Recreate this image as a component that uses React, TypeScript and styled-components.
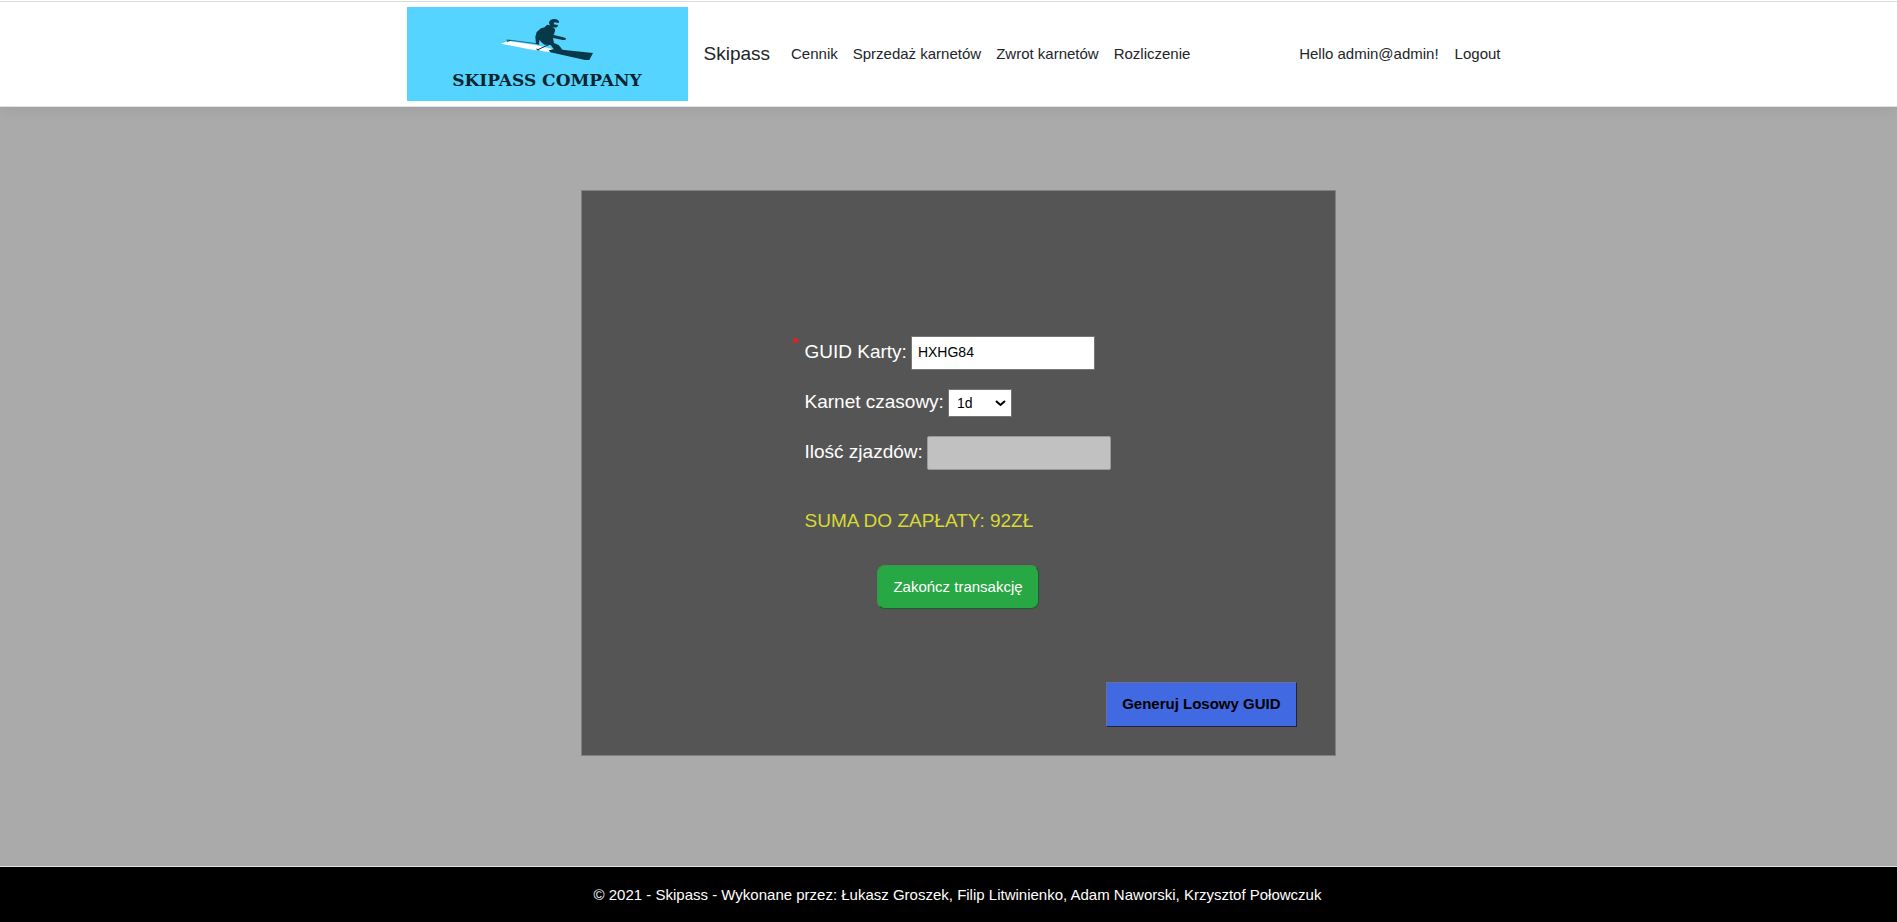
import React from 'react';
import styled, { createGlobalStyle } from 'styled-components';

const GlobalStyle = createGlobalStyle`
  *, *::before, *::after { box-sizing: border-box; }
  body {
    margin: 0;
    background: #aaa;
    color: #212529;
    font-family: "Liberation Sans", Arial, sans-serif;
    font-size: 15px;
    line-height: 22px;
  }
`;

const Page = styled.div`
  display: flex;
  flex-direction: column;
  min-height: 100vh;
`;

const Header = styled.header`
  border-top: 1px solid #fff;
  background: #fff;
  box-shadow: 0 4px 12px rgba(0, 0, 0, 0.06);
`;

const HeaderBar = styled.div`
  display: flex;
  justify-content: center;
  padding: 5px 0 5px 18px;
  border-top: 1px solid #dcdcdc;
  border-bottom: 1px solid #dee2e6;
`;

const HeaderContent = styled.div`
  display: flex;
  align-items: center;
  width: 100%;
  max-width: 1102px;
`;

const Logo = styled.a`
  display: flex;
  flex-direction: column;
  align-items: center;
  flex: none;
  width: 281px;
  height: 94px;
  padding-top: 3px;
  background: #55d4ff;
  color: #06242e;
  text-decoration: none;
`;

const LogoName = styled.span`
  font-family: "DejaVu Serif", serif;
  font-size: 17px;
  font-weight: 700;
  line-height: 20px;
  white-space: nowrap;
`;

const Brand = styled.a`
  margin: 0 14px 0 16px;
  color: #212529;
  font-size: 19px;
  text-decoration: none;
`;

const Nav = styled.nav`
  display: flex;
  flex: 1;
`;

const NavLink = styled.a`
  padding: 0 8px 0 7px;
  color: #212529;
  text-decoration: none;
  white-space: nowrap;
`;

const Account = styled.div`
  display: flex;
  align-items: center;
  gap: 8px;
`;

const LogoutButton = styled.button`
  padding: 0 8px;
  border: 0;
  background: none;
  color: #212529;
  font: inherit;
  cursor: pointer;
`;

const Main = styled.main`
  display: flex;
  flex: 1;
  justify-content: center;
  align-items: flex-start;
  padding: 83px 0 110px 19px;
`;

const Card = styled.form`
  display: flex;
  flex-direction: column;
  width: 100%;
  max-width: 755px;
  padding: 145px 38px 28px;
  border: 1px solid #808080;
  background: #555;
  color: #fff;
`;

const Fields = styled.div`
  display: flex;
  flex-direction: column;
  gap: 18px;
  padding-left: 185px;
`;

const Field = styled.div`
  display: flex;
  align-items: center;
  gap: 4px;
  position: relative;
`;

const Label = styled.label`
  font-size: 19px;
  line-height: 28px;
  padding-bottom: 2px;
`;

const RequiredMark = styled.span`
  position: absolute;
  top: 2px;
  left: -12px;
  width: 5px;
  height: 5px;
  border-radius: 50%;
  background: #e32020;
`;

const TextInput = styled.input`
  width: 184px;
  height: 34px;
  padding: 0 6px 2px;
  border: 1px solid #767676;
  background: #fff;
  color: #000;
  font-family: inherit;
  font-size: 14px;

  &:disabled {
    border-color: #9a9a9a;
    border-radius: 2px;
    background: #c1c1c1;
  }
`;

const SelectWrap = styled.div`
  display: grid;
  align-items: center;

  > * { grid-area: 1 / 1; }
  > svg { justify-self: end; margin-right: 6px; pointer-events: none; }
`;

const Select = styled.select`
  appearance: none;
  width: 64px;
  height: 28px;
  padding: 0 8px;
  border: 1px solid #767676;
  border-radius: 0;
  background: #fff;
  color: #000;
  font-family: inherit;
  font-size: 14px;
`;

const Total = styled.p`
  margin: 37px 0 30px 185px;
  color: #d9d934;
  font-size: 19px;
  line-height: 28px;
`;

const Button = styled.button<{ $kind: 'submit' | 'generate' }>`
  align-self: ${p => (p.$kind === 'submit' ? 'center' : 'flex-end')};
  height: ${p => (p.$kind === 'submit' ? 44 : 45)}px;
  padding: 0 15px 2px;
  border: 1px solid;
  border-color: ${p => (p.$kind === 'submit' ? '#3b9450 #17602a #17602a #3b9450' : '#66719a #1b2340 #1b2340 #66719a')};
  border-radius: ${p => (p.$kind === 'submit' ? 8 : 0)}px;
  background: ${p => (p.$kind === 'submit' ? '#28a745' : '#4169e1')};
  color: ${p => (p.$kind === 'submit' ? '#fff' : '#000')};
  font-family: inherit;
  font-size: 15px;
  font-weight: ${p => (p.$kind === 'submit' ? 400 : 700)};
  cursor: pointer;
`;

const CardFooter = styled.div`
  display: flex;
  justify-content: flex-end;
  margin-top: 73px;
`;

const Footer = styled.footer`
  padding: 17px 0 16px 18px;
  border-top: 1px solid #dee2e6;
  background: #000;
  color: #fff;
  text-align: center;
`;

const Skier = () => (
  <svg width="120" height="60" viewBox="-7 0 360 180" aria-hidden="true">
    <path d="M35 101 L58 93 L100 99 L150 107 L188 117 L183 127 L120 118 Z" fill="#fff" />
    <g fill="#06394a">
      <path d="M178 121 L196 117 L311 129 L300 150 L287 150 L183 127 Z" />
      <path d="M179 37 C181 29 189 26 197 27 C206 28 210 33 209 39 L195 37 L193 43 L206 45 L204 51 C198 54 190 53 185 48 L180 43 Z" />
      <path d="M166 52 L173 44 L184 46 L192 53 L197 57 L197 64 L193 75 L222 82 L230 85 L228 90 L220 90 L191 84 L194 99 L208 105 L220 120 L235 135 L200 126 L184 105 L165 104 L156 97 L151 89 L148 104 L140 102 L138 80 L142 66 L155 55 Z" />
    </g>
    <path d="M51 90 L64 91 L150 102" fill="none" stroke="#06394a" strokeWidth="2" />
    <path d="M53 94 L64 91 M143 120 L190 99 M141 117 L150 121" fill="none" stroke="#06394a" strokeWidth="3" />
  </svg>
);

export default function App() {
  return (
    <>
      <GlobalStyle />
      <Page>
        <Header>
          <HeaderBar>
            <HeaderContent>
              <Logo href="#">
                <Skier />
                <LogoName>SKIPASS COMPANY</LogoName>
              </Logo>
              <Brand href="#">Skipass</Brand>
              <Nav>
                <NavLink href="#">Cennik</NavLink>
                <NavLink href="#">Sprzedaż karnetów</NavLink>
                <NavLink href="#">Zwrot karnetów</NavLink>
                <NavLink href="#">Rozliczenie</NavLink>
              </Nav>
              <Account>
                <span>Hello admin@admin!</span>
                <LogoutButton type="button">Logout</LogoutButton>
              </Account>
            </HeaderContent>
          </HeaderBar>
        </Header>
        <Main>
          <Card onSubmit={e => e.preventDefault()}>
            <Fields>
              <Field>
                <RequiredMark />
                <Label htmlFor="guid">GUID Karty:</Label>
                <TextInput id="guid" type="text" defaultValue="HXHG84" required />
              </Field>
              <Field>
                <Label htmlFor="pass">Karnet czasowy:</Label>
                <SelectWrap>
                  <Select id="pass" defaultValue="1d">
                    <option>1d</option>
                  </Select>
                  <svg width="11" height="7" viewBox="0 0 11 7" aria-hidden="true">
                    <path d="M1 1 L5.5 5 L10 1" fill="none" stroke="#000" strokeWidth="2" />
                  </svg>
                </SelectWrap>
              </Field>
              <Field>
                <Label htmlFor="rides">Ilość zjazdów:</Label>
                <TextInput id="rides" type="text" disabled />
              </Field>
            </Fields>
            <Total>SUMA DO ZAPŁATY: 92ZŁ</Total>
            <Button type="submit" $kind="submit">Zakończ transakcję</Button>
            <CardFooter>
              <Button type="button" $kind="generate">Generuj Losowy GUID</Button>
            </CardFooter>
          </Card>
        </Main>
        <Footer>© 2021 - Skipass - Wykonane przez: Łukasz Groszek, Filip Litwinienko, Adam Naworski, Krzysztof Połowczuk</Footer>
      </Page>
    </>
  );
}
